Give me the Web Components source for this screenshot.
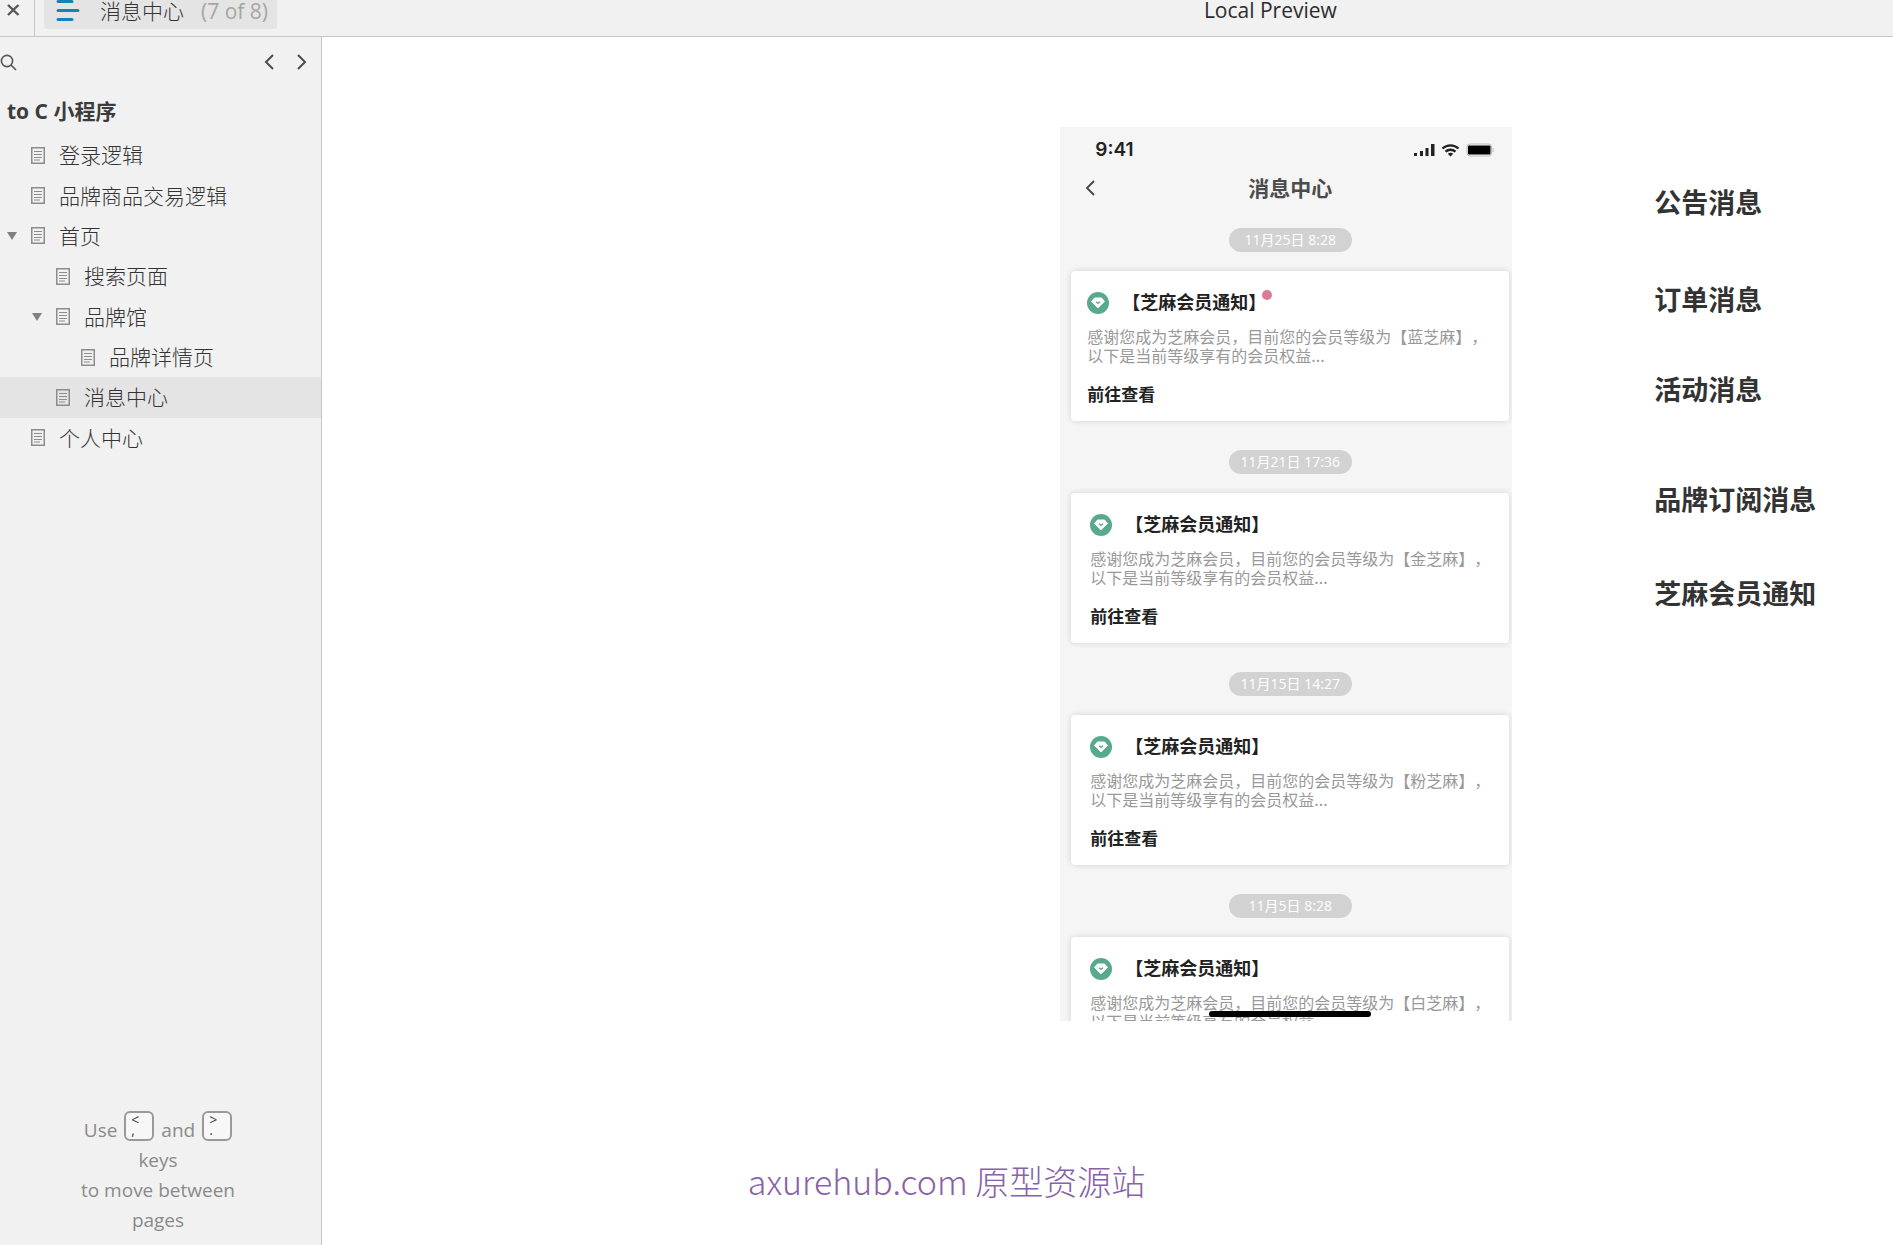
<!DOCTYPE html>
<html lang="zh-CN">
<head>
<meta charset="utf-8">
<meta name="viewport" content="width=device-width, initial-scale=1">
<title>消息中心</title>
<style>
  html, body {
    margin: 0;
    height: 100%;
    background: #fff;
    font-family: "Open Sans", "Noto Sans CJK SC", sans-serif;
    color: #333;
  }
</style>
</head>
<body>
<player-app>
  <player-header slot="header" page-name="消息中心" page-count="(7 of 8)">Local Preview</player-header>
  <site-map slot="sidebar" project="to C 小程序">
    <site-map-page level="0">登录逻辑</site-map-page>
    <site-map-page level="0">品牌商品交易逻辑</site-map-page>
    <site-map-page level="0" expanded>首页</site-map-page>
    <site-map-page level="1">搜索页面</site-map-page>
    <site-map-page level="1" expanded>品牌馆</site-map-page>
    <site-map-page level="2">品牌详情页</site-map-page>
    <site-map-page level="1" selected>消息中心</site-map-page>
    <site-map-page level="0">个人中心</site-map-page>
  </site-map>
  <phone-screen screen-title="消息中心" time="9:41">
    <message-card date="11月25日 8:28" grade="蓝芝麻" unread></message-card>
    <message-card date="11月21日 17:36" grade="金芝麻"></message-card>
    <message-card date="11月15日 14:27" grade="粉芝麻"></message-card>
    <message-card date="11月5日 8:28" grade="白芝麻"></message-card>
  </phone-screen>
  <message-types>
    <span>公告消息</span>
    <span>订单消息</span>
    <span>活动消息</span>
    <span>品牌订阅消息</span>
    <span>芝麻会员通知</span>
  </message-types>
  <water-mark slot="overlay">axurehub.com 原型资源站</water-mark>
</player-app>

<script>
class PlayerApp extends HTMLElement {
  constructor() {
    super();
    this.attachShadow({ mode: 'open' }).innerHTML = `
      <style>
        :host {
          display: flex;
          flex-direction: column;
          min-height: 100vh;
          position: relative;
        }
        .body {
          flex: 1;
          display: flex;
        }
        main {
          flex: 1;
          display: flex;
          align-items: flex-start;
          gap: 142px;
          padding-top: 90px;
          padding-left: 39%;
          overflow: hidden;
        }
      </style>
      <slot name="header"></slot>
      <div class="body">
        <slot name="sidebar"></slot>
        <main><slot></slot></main>
      </div>
      <slot name="overlay"></slot>
    `;
  }
}
customElements.define('player-app', PlayerApp);

class PlayerHeader extends HTMLElement {
  constructor() {
    super();
    const pageName = this.getAttribute('page-name') || '';
    const pageCount = this.getAttribute('page-count') || '';

    this.attachShadow({ mode: 'open' }).innerHTML = `
      <style>
        :host {
          display: flex;
          height: 36px;
          background: #f1f1f1;
          border-bottom: 1px solid #c6c6c6;
        }
        button {
          border: 0;
          padding: 0;
          background: none;
          font: inherit;
          color: inherit;
          cursor: pointer;
        }
        .close {
          display: flex;
          box-sizing: content-box;
          width: 27px;
          padding: 4px 0 0 7px;
          border-right: 1px solid #c6c6c6;
        }
        .page {
          display: flex;
          align-items: center;
          box-sizing: border-box;
          height: 29px;
          margin-left: 9px;
          padding: 0 9px 7px 12px;
          background: #e4e4e4;
          border-radius: 0 0 4px 4px;
          line-height: 22px;
        }
        .name {
          margin-left: 20px;
          font-size: 21px;
          font-weight: 300;
        }
        .count {
          margin-left: 17px;
          font-size: 21px;
          color: #a6a6a6;
        }
        .before { flex: 5; }
        .after { flex: 3; }
        .title {
          font-size: 21px;
          line-height: 21px;
          color: #2c2c2c;
        }
      </style>
      <button class="close" aria-label="Close">
        <svg width="13" height="12" viewBox="0 0 13 12" fill="none" stroke="#555" stroke-width="2.4">
          <path d="M1 1l10.500 10M11.500 1L1 11"/>
        </svg>
      </button>
      <button class="page">
        <svg width="24" height="22" viewBox="0 0 24 22" fill="none" stroke="#1482b4" stroke-width="3" stroke-linecap="round">
          <path d="M2 1.500h14M2 10.500h20M2 19.500h14"/>
        </svg>
        <span class="name">${pageName}</span>
        <span class="count">${pageCount}</span>
      </button>
      <div class="before"></div>
      <div class="title"><slot></slot></div>
      <div class="after"></div>
    `;
  }
}
customElements.define('player-header', PlayerHeader);

class SiteMap extends HTMLElement {
  constructor() {
    super();
    const project = this.getAttribute('project') || '';

    this.attachShadow({ mode: 'open' }).innerHTML = `
      <style>
        :host {
          display: flex;
          flex-direction: column;
          flex: none;
          width: 321px;
          background: #f1f1f1;
          border-right: 1px solid #c6c6c6;
        }
        .toolbar {
          display: flex;
          align-items: center;
          height: 50px;
          padding-right: 13px;
        }
        button {
          display: flex;
          border: 0;
          padding: 0;
          background: none;
          cursor: pointer;
        }
        .search { margin-right: auto; }
        .next { margin-left: 21px; }
        h1 {
          margin: 8px 0;
          padding-left: 7px;
          font-size: 21px;
          line-height: 32px;
          font-weight: 700;
          color: #3c3c3c;
        }
        nav {
          display: flex;
          flex-direction: column;
          height: 323px;
        }
        footer {
          width: 160px;
          margin: auto auto 10px 78px;
          text-align: center;
          font-size: 19px;
          line-height: 30px;
          color: #8a8a8a;
        }
        .row {
          display: flex;
          justify-content: center;
          gap: 7px;
        }
        kbd {
          box-sizing: border-box;
          display: flex;
          flex-direction: column;
          width: 30px;
          height: 30px;
          padding-left: 5px;
          margin-top: -4px;
          border: 2px solid #999;
          border-radius: 6px;
          background: #f7f7f7;
          font: 14px/11px "Open Sans", sans-serif;
          text-align: left;
          color: #444;
        }
        kbd span:first-child { line-height: 14px; }
        kbd span:last-child { line-height: 6px; }
      </style>
      <div class="toolbar">
        <button class="search" aria-label="Search">
          <svg width="17" height="17" viewBox="0 0 17 17" fill="none" stroke="#555" stroke-width="1.600">
            <circle cx="7" cy="7" r="5.600"/>
            <path d="M11 11l5 5"/>
          </svg>
        </button>
        <button aria-label="Previous page">
          <svg width="12" height="16" viewBox="0 0 12 16" fill="none" stroke="#4c4c4c" stroke-width="2">
            <path d="M10 1L3 8l7 7"/>
          </svg>
        </button>
        <button class="next" aria-label="Next page">
          <svg width="12" height="16" viewBox="0 0 12 16" fill="none" stroke="#4c4c4c" stroke-width="2">
            <path d="M2 1l7 7-7 7"/>
          </svg>
        </button>
      </div>
      <h1>${project}</h1>
      <nav><slot></slot></nav>
      <footer>
        <div class="row">Use <kbd><span>&lt;</span><span>,</span></kbd> and <kbd><span>&gt;</span><span>.</span></kbd></div>
        keys<br>to move between<br>pages
      </footer>
    `;
  }
}
customElements.define('site-map', SiteMap);

class SiteMapPage extends HTMLElement {
  constructor() {
    super();
    const level = Number(this.getAttribute('level')) || 0;
    const arrow = this.hasAttribute('expanded')
      ? '<svg width="10" height="8" viewBox="0 0 10 8"><path d="M0 0h10L5 8z" fill="#808080"/></svg>'
      : '';

    this.attachShadow({ mode: 'open' }).innerHTML = `
      <style>
        :host {
          display: flex;
          flex: 1;
        }
        :host([selected]) { background: #e4e4e4; }
        a {
          flex: 1;
          display: flex;
          align-items: center;
          padding-left: ${7 + level * 25}px;
          font-size: 21px;
          line-height: 32px;
          font-weight: 300;
          color: #333;
          text-decoration: none;
        }
        .arrow {
          display: flex;
          width: 24px;
        }
        .icon { margin-right: 14px; }
      </style>
      <a href="#">
        <span class="arrow">${arrow}</span>
        <svg class="icon" width="14" height="17" viewBox="0 0 14 17" fill="none" stroke="#8c8c8c">
          <rect x=".75" y=".75" width="12.500" height="15.500" stroke-width="1.500"/>
          <path d="M3 4.500h8M3 7.500h8M3 10.500h8M3 13h6" stroke-width="1.200"/>
        </svg>
        <slot></slot>
      </a>
    `;
  }
}
customElements.define('site-map-page', SiteMapPage);

class PhoneScreen extends HTMLElement {
  constructor() {
    super();
    const title = this.getAttribute('screen-title') || '';
    const time = this.getAttribute('time') || '';

    this.attachShadow({ mode: 'open' }).innerHTML = `
      <style>
        :host {
          display: block;
          flex: none;
          position: relative;
          box-sizing: border-box;
          width: 452px;
          height: 894px;
          padding: 0 3px 0 11px;
          overflow: hidden;
          background: #f5f5f5;
        }
        .status {
          display: flex;
          align-items: center;
          padding: 12px 15px 0 24px;
          height: 22px;
        }
        .time {
          margin-right: auto;
          font: 600 19px/22px Inter, sans-serif;
          color: #222;
        }
        .bar {
          display: grid;
          grid-template-columns: 1fr auto 1fr;
          align-items: center;
          height: 32px;
          margin: 11px 0 24px;
        }
        .bar button {
          display: flex;
          border: 0;
          padding: 0 0 0 14px;
          background: none;
        }
        h2 {
          margin: 0;
          font-size: 21px;
          line-height: 32px;
          font-weight: 700;
          color: #4c4c4c;
        }
        .home {
          position: absolute;
          left: 149px;
          bottom: 4px;
          width: 162px;
          height: 6px;
          border-radius: 3px;
          background: #000;
        }
      </style>
      <div class="status">
        <span class="time">${time}</span>
        <svg width="80" height="14" viewBox="0 0 80 14">
          <path d="M0 10h3v3H0zM6 8h3v5H6zM11.500 5h3v8h-3zM17 1h3.500v12H17z" fill="#222"/>
          <g fill="none" stroke="#222" stroke-width="2.300">
            <path d="M28.500 5.500c4.500-4.300 11.500-4.300 16 0M31.500 8.700c2.800-2.600 7.200-2.600 10 0"/>
          </g>
          <path d="M33.800 10.700c1.500-1.300 3.900-1.300 5.400 0L36.500 13.500z" fill="#222"/>
          <rect x="53" y="1" width="24.500" height="12" rx="3" fill="none" stroke="#bbb"/>
          <rect x="54" y="2.500" width="22.500" height="9" rx="1"/>
          <path d="M79 5v4" stroke="#bbb"/>
        </svg>
      </div>
      <div class="bar">
        <button aria-label="Back">
          <svg width="10" height="16" viewBox="0 0 10 16" fill="none" stroke="#444" stroke-width="1.800">
            <path d="M9 1L2 8l7 7"/>
          </svg>
        </button>
        <h2>${title}</h2>
      </div>
      <slot></slot>
      <div class="home"></div>
    `;
  }
}
customElements.define('phone-screen', PhoneScreen);

class MessageCard extends HTMLElement {
  constructor() {
    super();
    const date = this.getAttribute('date') || '';
    const grade = this.getAttribute('grade') || '';
    const dot = this.hasAttribute('unread') ? '<i class="dot"></i>' : '';

    this.attachShadow({ mode: 'open' }).innerHTML = `
      <style>
        :host {
          display: block;
          margin-bottom: 29px;
          text-spacing-trim: space-all;
        }
        time {
          display: block;
          box-sizing: border-box;
          width: 123px;
          margin: 0 auto 19px;
          border-radius: 12px;
          background: #d2d2d2;
          color: #fff;
          font-size: 14px;
          line-height: 24px;
          text-align: center;
          white-space: nowrap;
        }
        article {
          box-sizing: border-box;
          height: 150px;
          padding: 18px 16px 0 19px;
          border-radius: 4px;
          background: #fff;
          box-shadow: 0 0 6px rgba(0, 0, 0, .14);
        }
        :host([unread]) article { padding-left: 16px; }
        header {
          display: flex;
          align-items: center;
          height: 28px;
        }
        h3 {
          margin: 0 0 0 13px;
          font: 700 18px/24px "Noto Sans CJK SC", sans-serif;
          align-self: flex-start;
          color: #222;
        }
        .dot {
          width: 10px;
          height: 10px;
          margin: -16px 0 0 -4px;
          border-radius: 50%;
          background: #dc7c92;
        }
        p {
          margin: 10px 0 16px;
          font: 400 16px/19px "Noto Sans CJK SC", sans-serif;
          color: #999;
        }
        a {
          display: block;
          font: 700 17px/26px "Noto Sans CJK SC", sans-serif;
          color: #222;
          text-decoration: none;
        }
      </style>
      <time>${date}</time>
      <article>
        <header>
          <svg width="22" height="22" viewBox="0 0 22 22">
            <circle cx="11" cy="11" r="11" fill="#58aa8e"/>
            <path d="M7.500 6h7l3 3.500L11 16 4.500 9.500z" fill="#fff" stroke="#fff" stroke-linejoin="round"/>
            <path d="M9 9.800l2 1.700 2-1.700" fill="none" stroke="#58aa8e" stroke-width="1.300"/>
          </svg>
          <h3>【芝麻会员通知】</h3>${dot}
        </header>
        <p>感谢您成为芝麻会员，目前您的会员等级为【${grade}】，以下是当前等级享有的会员权益...</p>
        <a href="#">前往查看</a>
      </article>
    `;
  }
}
customElements.define('message-card', MessageCard);

class MessageTypes extends HTMLElement {
  constructor() {
    super();
    this.attachShadow({ mode: 'open' }).innerHTML = `
      <style>
        :host {
          display: grid;
          grid-template-rows: 97px 90px 110px 94px 36px;
          padding-top: 58px;
          font-size: 27px;
          line-height: 36px;
          font-weight: 700;
          white-space: nowrap;
          color: #333;
        }
      </style>
      <slot></slot>
    `;
  }
}
customElements.define('message-types', MessageTypes);

class WaterMark extends HTMLElement {
  constructor() {
    super();
    this.attachShadow({ mode: 'open' }).innerHTML = `
      <style>
        :host {
          position: absolute;
          left: 0;
          right: 0;
          bottom: 40px;
          text-align: center;
          font: 300 34px/48px "Noto Sans CJK SC", sans-serif;
          color: #8862a8;
          pointer-events: none;
        }
      </style>
      <slot></slot>
    `;
  }
}
customElements.define('water-mark', WaterMark);
</script>
</body>
</html>
